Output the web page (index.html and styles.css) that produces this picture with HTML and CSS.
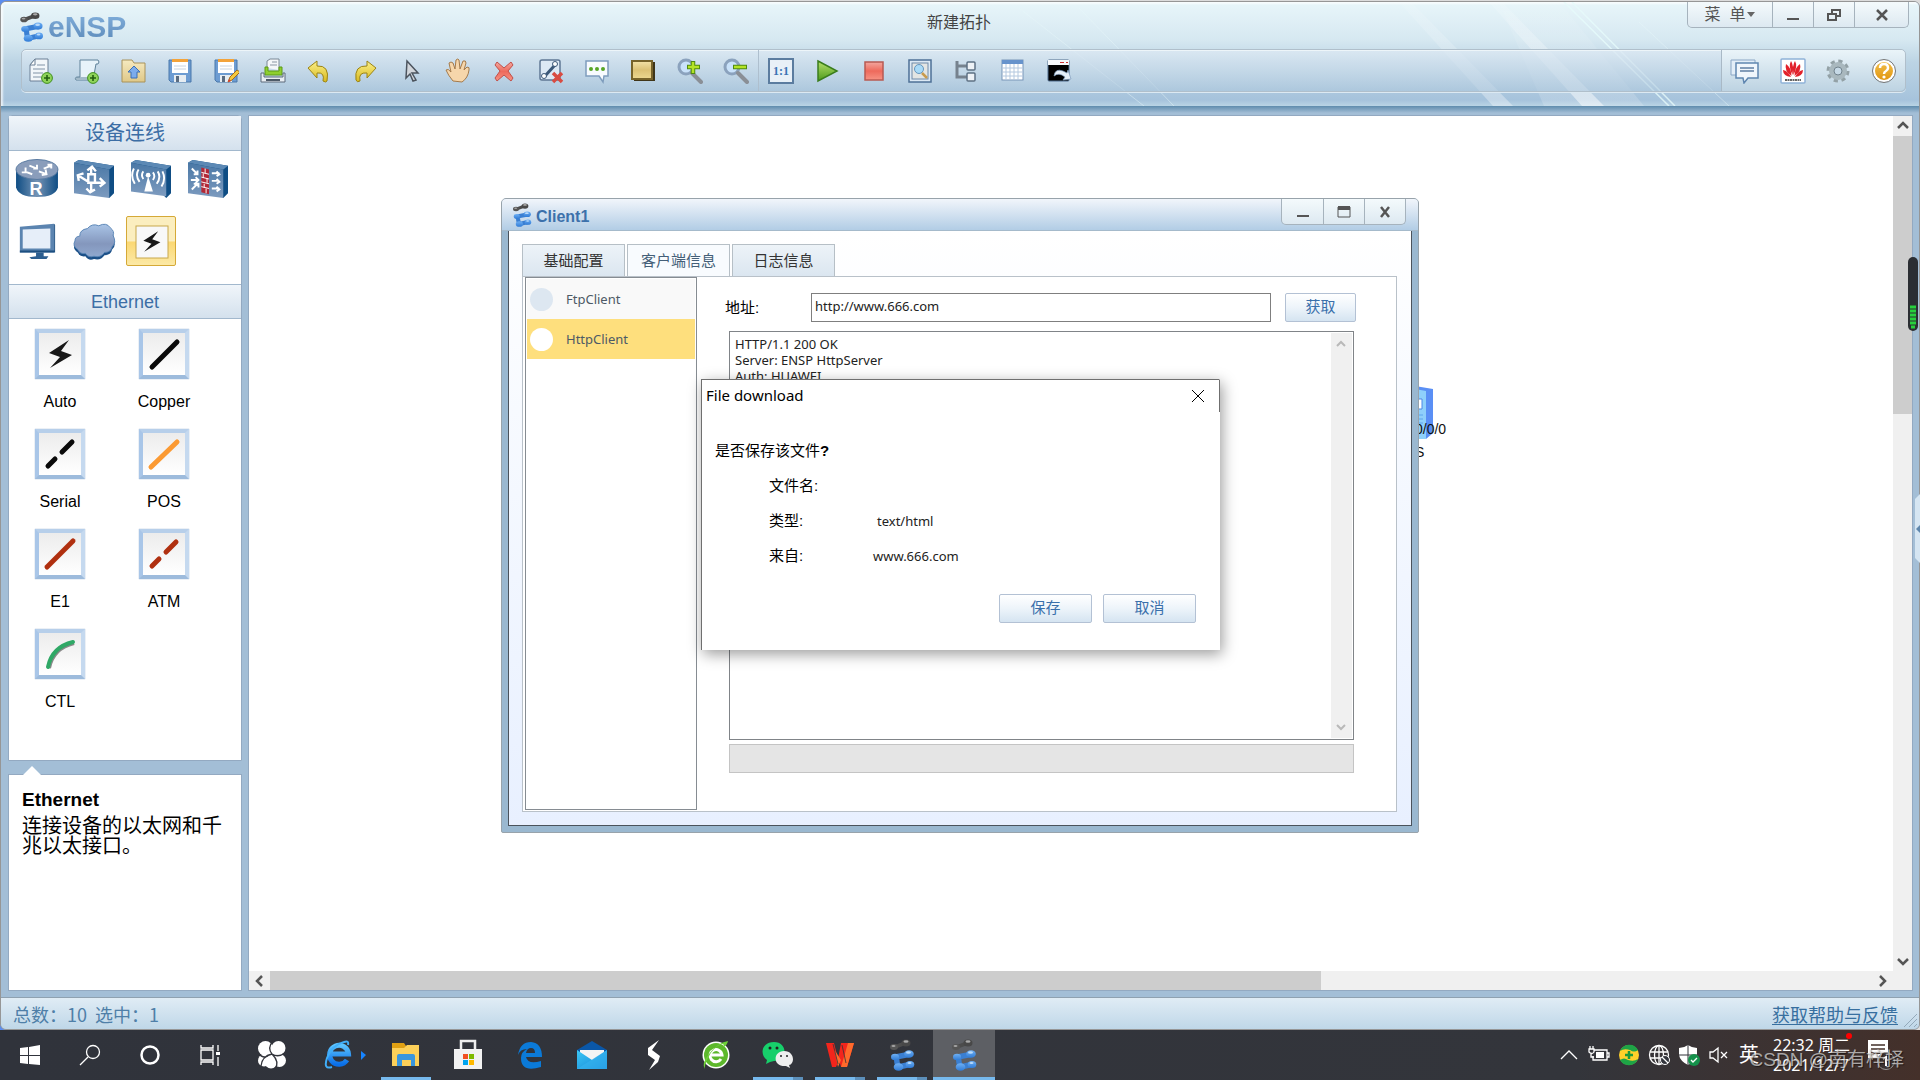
FILE: index.html
```html
<!DOCTYPE html>
<html lang="zh-CN">
<head>
<meta charset="utf-8">
<title>eNSP</title>
<link rel="stylesheet" href="styles.css">
</head>
<body>
<svg class="defs" aria-hidden="true">
  <defs>
    <linearGradient id="gBlue" x1="0" y1="0" x2="0" y2="1"><stop offset="0" stop-color="#6fb0f4"/><stop offset="1" stop-color="#2f7bd6"/></linearGradient>
    <linearGradient id="gSteel" x1="0" y1="0" x2="0" y2="1"><stop offset="0" stop-color="#4a78a6"/><stop offset="1" stop-color="#7d9bbf"/></linearGradient>
    <linearGradient id="gDrum" x1="0" y1="0" x2="1" y2="0"><stop offset="0" stop-color="#0f4d84"/><stop offset=".5" stop-color="#7594b5"/><stop offset="1" stop-color="#0f4d84"/></linearGradient>
    <linearGradient id="gCloud" x1="0" y1="0" x2="0" y2="1"><stop offset="0" stop-color="#a9c4e6"/><stop offset=".6" stop-color="#8497bd"/><stop offset="1" stop-color="#90a8ce"/></linearGradient>
    <linearGradient id="gFold" x1="0" y1="0" x2="0" y2="1"><stop offset="0" stop-color="#f6eac0"/><stop offset="1" stop-color="#dfc888"/></linearGradient>
    <linearGradient id="gNote" x1="0" y1="0" x2="0" y2="1"><stop offset="0" stop-color="#f3e2a8"/><stop offset=".5" stop-color="#dcc175"/><stop offset="1" stop-color="#ecd891"/></linearGradient>
    <linearGradient id="gYel" x1="0" y1="0" x2="0" y2="1"><stop offset="0" stop-color="#fbf08a"/><stop offset="1" stop-color="#d8b91e"/></linearGradient>
    <linearGradient id="gGreen" x1="0" y1="0" x2="0" y2="1"><stop offset="0" stop-color="#b5e06a"/><stop offset="1" stop-color="#4c9a1b"/></linearGradient>
    <linearGradient id="gRed" x1="0" y1="0" x2="0" y2="1"><stop offset="0" stop-color="#f3a79f"/><stop offset=".5" stop-color="#ee6a5c"/><stop offset="1" stop-color="#f79384"/></linearGradient>
    <linearGradient id="gGold" x1="0" y1="0" x2="0" y2="1"><stop offset="0" stop-color="#f2c04c"/><stop offset="1" stop-color="#e0940f"/></linearGradient>
    <linearGradient id="gIe" x1="0" y1="0" x2="0" y2="1"><stop offset="0" stop-color="#5cc4ff"/><stop offset="1" stop-color="#0a6fe8"/></linearGradient>
    <linearGradient id="gMail" x1="0" y1="0" x2="1" y2="1"><stop offset="0" stop-color="#3cc8f4"/><stop offset="1" stop-color="#1583d8"/></linearGradient>
    <linearGradient id="gRay" x1="0" y1="0" x2="0" y2="1"><stop offset="0" stop-color="#fff" stop-opacity=".1"/><stop offset="1" stop-color="#fff" stop-opacity=".5"/></linearGradient>
    <symbol id="logo" viewBox="0 0 25 32">
      <path d="M4 8.500L16 4" stroke="#4c4c4c" stroke-width="4" stroke-linecap="round"/>
      <ellipse cx="4.500" cy="8" rx="4" ry="3" fill="#555"/><ellipse cx="16.500" cy="4" rx="4.500" ry="3.500" fill="#484848"/>
      <ellipse cx="4" cy="7" rx="2" ry="1" fill="#a5a5a5"/><ellipse cx="16.500" cy="2.500" rx="2.500" ry="1.200" fill="#aaa"/>
      <path d="M6 18L19 15.500M7 18Q7 24 9 28L20 25.500" fill="none" stroke="#3a7fd2" stroke-width="5.500" stroke-linecap="round" stroke-linejoin="round"/>
      <g fill="url(#gBlue)"><ellipse cx="5.500" cy="18" rx="4" ry="3.200"/><ellipse cx="19.500" cy="15" rx="4.800" ry="3.800"/><ellipse cx="9" cy="28" rx="4.800" ry="3.800"/><ellipse cx="20.500" cy="25.500" rx="4.300" ry="3.600"/></g>
      <ellipse cx="19" cy="13.500" rx="2.500" ry="1.300" fill="#b9dafa"/><ellipse cx="20" cy="24" rx="2" ry="1.100" fill="#b9dafa"/>
    </symbol>
    <symbol id="plus" viewBox="0 0 12 12"><circle cx="6" cy="6" r="5.400" fill="#8fd45a" stroke="#3f8f1f"/><path d="M6 3v6M3 6h6" stroke="#235f10" stroke-width="1.600"/></symbol>
    <symbol id="floppy" viewBox="0 0 26 26"><path d="M2 2h22v22H4l-2-2z" fill="#6d9cd2" stroke="#4b78ab"/><path d="M5 2h16v13H5z" fill="#fff"/><path d="M5 1h16v3H5z" fill="#f3a33a"/><path d="M7 8h12M7 11h12" stroke="#c8d4e0"/><path d="M7 17h12v7H7z" fill="#e7edf2"/><path d="M9 18h3v6H9z" fill="#5b6c80"/></symbol>
    <symbol id="bolt" viewBox="0 0 50 50"><path d="M34 11 L14 24 L25 28 L15 39 L37 26 L26 22Z" fill="#181818"/></symbol>
  </defs>
</svg>

<main class="app">
  <header class="head">
    <svg class="rays" viewBox="0 0 920 104" width="920" height="104" aria-hidden="true">
      <path d="M500 0H560L645 104H545Z" fill="url(#gRay)" opacity=".35"/>
      <path d="M490 0H503L605 104H583Z" fill="url(#gRay)"/>
      <path d="M400 0H412L514 104H494Z" fill="url(#gRay)" opacity=".7"/>
      <path d="M565 0L670 104M573 0L676 104" stroke="#e6fbfb" stroke-width="1.500" opacity=".8"/>
      <path d="M640 20L730 104M20 6L145 104M80 6L175 104" stroke="#e8f8fa" opacity=".45"/>
    </svg>
    <div class="brandrow">
      <div class="brand"><svg width="27" height="30"><use href="#logo"/></svg><span>eNSP</span></div>
      <h1 class="doctitle">新建拓扑</h1>
      <div class="winbtns main">
        <button class="menu">菜&nbsp; 单<svg width="8" height="6"><path d="M0 0h8L4 5z" fill="#666"/></svg></button>
        <button aria-label="最小化"><svg width="14" height="14"><path d="M1 10h12v2H1z" fill="#555"/></svg></button>
        <button aria-label="还原"><svg width="14" height="14"><path d="M5 5V2h8v6h-3M1 6h8v6H1z" fill="none" stroke="#555" stroke-width="2"/></svg></button>
        <button class="close" aria-label="关闭"><svg width="14" height="14"><path d="M2 2L12 12M12 2L2 12" stroke="#555" stroke-width="2.500"/></svg></button>
      </div>
    </div>
    <nav class="toolbar">
      <div class="tools first">
        <button aria-label="新建拓扑"><svg viewBox="0 0 26 26"><path d="M7 1h13v22H2V7z" fill="#f2f6fa" stroke="#6a7f95"/><path d="M7 1v6H2z" fill="#fff" stroke="#6a7f95"/><path d="M9 7h8M5 11h12M5 15h10M5 19h8" stroke="#a7b4c2" stroke-width="1.500"/><use href="#plus" x="13" y="14" width="12" height="12"/></svg></button>
        <button aria-label="新建试卷工程"><svg viewBox="0 0 26 26"><path d="M6 2h18q2 2 0 4h-2l-3 16H2q-2-3 2-3h2z" fill="#e8f3fa" stroke="#5f8199"/><path d="M2 20h13" stroke="#5f8199"/><use href="#plus" x="13" y="14" width="12" height="12"/></svg></button>
        <button aria-label="打开"><svg viewBox="0 0 26 26"><path d="M1 4V2h10l2 3h11v19H1z" fill="url(#gFold)" stroke="#a8925a"/><path d="M13 8l6 6h-3v6h-6v-6H7z" fill="#7cacec" stroke="#3b6fb5"/></svg></button>
        <button aria-label="保存"><svg viewBox="0 0 26 26"><use href="#floppy"/></svg></button>
        <button aria-label="另存为"><svg viewBox="0 0 26 26"><use href="#floppy"/><path d="M15 24l2-5 7-7 3 2-8 8z" fill="#f4c93c" stroke="#a06a1e"/><path d="M15 24l1-3 2 2z" fill="#d33"/></svg></button>
        <button aria-label="打印"><svg viewBox="0 0 26 26"><path d="M7 10V3l3-2h9v11" fill="#f4f6f8" stroke="#7b8896"/><path d="M12 4h5M10 7h7" stroke="#8a96a4"/><path d="M5 9h3v4h11V9h3v8H5z" fill="#8fcf2f" stroke="#5a9a19"/><path d="M1 15h3v4h19v-4h2v9H1z" fill="#e9eef3" stroke="#5d6b7a"/><path d="M6 22h14" stroke="#4d5a68" stroke-width="2"/></svg></button>
        <button aria-label="撤销"><svg viewBox="0 0 26 26"><path d="M2 10l9-7v5q13-1 10 15-1 2-4 0 2-9-6-8v5z" fill="url(#gYel)" stroke="#9a8315"/></svg></button>
        <button aria-label="恢复"><svg viewBox="0 0 26 26"><path d="M24 10l-9-7v5Q2 7 4 22q1 3 4 1-2-9 7-8v5z" fill="url(#gYel)" stroke="#9a8315"/></svg></button>
        <button aria-label="选择"><svg viewBox="0 0 26 26"><path d="M8 3l11 12h-6l4 7-3 1-3-7-4 4z" fill="#d2d6db" stroke="#4c545e" stroke-width="1.500"/></svg></button>
        <button aria-label="拖动"><svg viewBox="0 0 26 26"><path d="M8 23Q3 17 1 12q2-2 5 2L4 5q2-2 4 0l2 6 1-9q2-2 3 0l1 9 3-8q3-1 3 2l-2 7 3-3q3 0 2 3-1 8-7 12z" fill="#f6d6ab" stroke="#a47a4b"/></svg></button>
        <button aria-label="删除"><svg viewBox="0 0 26 26"><path d="M6 4l7 6 7-6 2 3-5 6 5 7-2 3-7-6-7 6-2-3 5-7-5-6z" fill="url(#gRed)" stroke="#c0504a"/></svg></button>
        <button aria-label="删除连线"><svg viewBox="0 0 26 26"><rect x="2" y="2" width="20" height="20" rx="2" fill="#dde9f5" stroke="#5f7794" stroke-width="1.500"/><path d="M7 18L17 7" stroke="#3c5878" stroke-width="3"/><circle cx="6" cy="18" r="2.500" fill="#fff" stroke="#3c5878"/><circle cx="17" cy="6" r="2.500" fill="#fff" stroke="#3c5878"/><path d="M15 15l9 9M24 15l-9 9" stroke="#d94b41" stroke-width="3.500"/></svg></button>
        <button aria-label="文本"><svg viewBox="0 0 26 26"><path d="M2 3h22v15h-4l-1 6-4-6H2z" fill="#f8fbfe" stroke="#7f9dbd" stroke-width="1.500"/><g fill="#57a526"><circle cx="7" cy="11" r="2"/><circle cx="13" cy="11" r="2"/><circle cx="19" cy="11" r="2"/></g></svg></button>
        <button aria-label="调色板"><svg viewBox="0 0 26 26"><path d="M4 4h21v19H4z" fill="#3f3519"/><path d="M2 3h20v18H2z" fill="url(#gNote)" stroke="#76622a" stroke-width="2"/></svg></button>
        <button aria-label="放大"><svg viewBox="0 0 26 26"><circle cx="9" cy="9" r="7" fill="#c9e2fa" stroke="#8ba2bd" stroke-width="3"/><path d="M15 15l9 9" stroke="#8a8f96" stroke-width="4" stroke-linecap="round"/><path d="M16 3v13M10 9h13" stroke="#4f8a12" stroke-width="4.500"/><path d="M16 4v11M11 9h11" stroke="#b4e326" stroke-width="2.500"/></svg></button>
        <button aria-label="缩小"><svg viewBox="0 0 26 26"><circle cx="9" cy="9" r="7" fill="#c9e2fa" stroke="#8ba2bd" stroke-width="3"/><path d="M15 15l9 9" stroke="#8a8f96" stroke-width="4" stroke-linecap="round"/><path d="M10 9h14" stroke="#4f8a12" stroke-width="4.500"/><path d="M11 9h12" stroke="#b4e326" stroke-width="2.500"/></svg></button>
      </div>
      <div class="tools second">
        <button class="ratio" aria-label="原始大小"><span>1:1</span></button>
        <button aria-label="开启设备"><svg viewBox="0 0 26 26"><path d="M4 3L23 13 4 23z" fill="url(#gGreen)" stroke="#3a7d1c" stroke-width="1.500"/></svg></button>
        <button aria-label="停止设备"><svg viewBox="0 0 26 26"><rect x="4" y="4" width="18" height="18" fill="url(#gRed)" stroke="#b85a52" stroke-width="1.500"/></svg></button>
        <button aria-label="数据抓包"><svg viewBox="0 0 26 26"><rect x="2" y="2" width="22" height="22" fill="#dce9f5" stroke="#4e7096" stroke-width="1.500"/><rect x="5" y="5" width="16" height="16" fill="#e3e5e3" stroke="#6f8aa8"/><circle cx="12" cy="11" r="4.500" fill="#a9daf7" stroke="#6696bd"/><path d="M15 15l5 5" stroke="#c89b4e" stroke-width="2.500"/></svg></button>
        <button aria-label="显示接口"><svg viewBox="0 0 26 26"><path d="M4 3v16h10M4 8h10" fill="none" stroke="#76828e" stroke-width="3"/><rect x="14" y="4" width="8" height="8" rx="1" fill="#eef2f6" stroke="#5e7184" stroke-width="1.500"/><rect x="14" y="15" width="8" height="8" rx="1" fill="#eef2f6" stroke="#5e7184" stroke-width="1.500"/></svg></button>
        <button aria-label="网格"><svg viewBox="0 0 26 26"><rect x="2" y="2" width="21" height="20" fill="#fff" stroke="#7995b8"/><path d="M2 2h21v4H2z" fill="#6793cc"/><path d="M2 10h21M2 14h21M2 18h21M6 6v16M10 6v16M14 6v16M18 6v16" stroke="#b4c8df"/></svg></button>
        <button aria-label="命令行"><svg viewBox="0 0 26 26"><rect x="2" y="2" width="21" height="21" rx="1" fill="#000" stroke="#4d6a8b"/><path d="M2 2h21v5H2z" fill="#f6f8fa"/><path d="M14 4.500h4M20 4.500h2" stroke="#c33"/><path d="M8 18Q9 10 17 13l4 2 1-3 3 9-8 1 2-3q-6-5-11-1z" fill="#e6eff8" stroke="#7e9cbd" stroke-width=".7"/></svg></button>
      </div>
      <div class="tools extra">
        <button aria-label="论坛"><svg viewBox="0 0 30 26"><path d="M1 2h24v15H1z" fill="#e3eef8" stroke="#8aa6c5"/><path d="M6 5h22v15H18l-4 5-1-5H6z" fill="#f0f6fc" stroke="#5f86b0" stroke-width="1.500"/><path d="M10 10h14M10 13h14" stroke="#5f7fa3" stroke-width="1.500"/></svg></button>
        <button aria-label="华为"><svg viewBox="0 0 26 26"><rect x="1" y="1" width="24" height="24" rx="1" fill="#fff" stroke="#8fb2d8" stroke-width="1.500"/><g fill="#e2212b"><path d="M12.500 17Q8 8 11 3q3 4 1.500 14z"/><path d="M13.500 17Q18 8 15 3q-3 4-1.500 14z"/><path d="M11.500 18Q4 13 6 6q5 3 5.500 12z"/><path d="M14.500 18q7.500-5 5.500-12-5 3-5.500 12z"/><path d="M11 19q-8-1-8-7 5 1 8 7z"/><path d="M15 19q8-1 8-7-5 1-8 7z"/></g><path d="M5 22h16" stroke="#666" stroke-width="2" stroke-dasharray="2 .5"/></svg></button>
        <button aria-label="设置"><svg viewBox="0 0 26 26"><circle cx="13" cy="13" r="9.500" fill="none" stroke="#93a1a6" stroke-width="4" stroke-dasharray="4 3.460"/><circle cx="13" cy="13" r="6.500" fill="none" stroke="#a9b8be" stroke-width="5"/><circle cx="13" cy="13" r="4" fill="#c6d9e6" stroke="#71828c"/></svg></button>
        <button aria-label="帮助"><svg viewBox="0 0 26 26"><circle cx="13" cy="13" r="10" fill="url(#gGold)" stroke="#fff" stroke-width="2"/><circle cx="13" cy="13" r="11.500" fill="none" stroke="#777"/><path d="M9 10q0-4 4-4t4 4q0 2-2 3t-2 3" fill="none" stroke="#fff" stroke-width="2.500"/><circle cx="13" cy="19" r="1.600" fill="#fff"/></svg></button>
      </div>
    </nav>
  </header>

  <div class="work">
    <aside class="side">
      <section class="panel devices">
        <h2>设备连线</h2>
        <div class="kinds">
          <button aria-label="路由器"><svg viewBox="0 0 46 42"><path d="M1 11v19q3 10 22 10t22-10V11z" fill="url(#gDrum)"/><ellipse cx="23" cy="11" rx="22" ry="10.500" fill="#8a9dbb" stroke="#56789f"/><g stroke="#fff" stroke-width="2" fill="none"><path d="M10 13l8 3M11 9v5h-4M15 7l8 3M23 6v4h-4M25 13l8 3M32 11l1 5-5 1M30 10l8-3M34 6h4v4"/></g><text x="15" y="38" class="rlabel">R</text></svg></button>
          <button aria-label="交换机"><svg viewBox="0 0 46 42"><path d="M2 4l5-3 37 6v29l-5 5z" fill="#0f4d84"/><path d="M2 4l5-3 37 6-5 4z" fill="#5c89b5"/><path d="M2 4l37 7v30L2 36z" fill="url(#gSteel)"/><g stroke="#fff" stroke-width="2.500" fill="none"><path d="M17 16h7v9h-7zM20 16V8M16 12l5-4 4 5M17 24L6 17M12 15l-6 2 1 6M24 25h9M29 20l5 5-5 4M20 25v10M15 31l4 4 5-3"/></g></svg></button>
          <button aria-label="无线"><svg viewBox="0 0 46 42"><path d="M2 4l5-3 37 6v29l-5 5z" fill="#0f4d84"/><path d="M2 4l5-3 37 6-5 4z" fill="#5c89b5"/><path d="M2 4l37 7v28L2 34z" fill="url(#gSteel)"/><path d="M20 18l5 16h-9z" fill="#fff"/><circle cx="20" cy="17" r="2.500" fill="#fff"/><g stroke="#fff" stroke-width="2" fill="none"><path d="M15 13q-3 4 0 8M10 11q-4 6 1 13M5 10q-4 8 1 16M25 14q3 4 0 8M30 13q4 6-1 13M35 13q4 8-1 16"/></g></svg></button>
          <button aria-label="防火墙"><svg viewBox="0 0 46 42"><path d="M2 4l5-3 37 6v29l-5 5z" fill="#0f4d84"/><path d="M2 4l5-3 37 6-5 4z" fill="#5c89b5"/><path d="M2 4l37 7v30L2 36z" fill="url(#gSteel)"/><path d="M16 9l8 2v26l-8-2z" fill="#b32836"/><path d="M16 14l8 2M16 19l8 2M16 24l8 2M16 29l8 2M20 10v5M18 15v5M22 20v5M19 26v4M21 31v5" stroke="#fff"/><g stroke="#fff" stroke-width="2" fill="none"><path d="M6 10l6 6M12 12v4H8M5 22h8M10 19l3 3-3 3M6 32l6-6M8 26h5v4M27 15h8M32 13l3 3-3 2M27 23h8M32 21l3 3-3 2M27 31h8M32 29l3 3-3 2"/></g></svg></button>
          <button aria-label="终端"><svg viewBox="0 0 46 42"><path d="M5 6l36-3v30H5z" fill="#5b84b0"/><path d="M41 3l1 1v29H5v-2h36z" fill="#1c4f80"/><path d="M8 9l29-1v21H8z" fill="#e6eef9"/><path d="M22 33h8v4h5l-2 3H17l-2-2 7-1z" fill="#2c5e90"/></svg></button>
          <button aria-label="其他设备"><svg viewBox="0 0 46 42"><path d="M6 30q-6-4-3-9 0-5 5-5 0-7 8-8 5-6 12-3 8-4 12 2 5 4 3 8 4 8-1 12-1 6-8 6-4 6-11 4-6 2-9-3-6 1-8-4z" fill="#1c5088" transform="translate(0 3)"/><path d="M6 30q-6-4-3-9 0-5 5-5 0-7 8-8 5-6 12-3 8-4 12 2 5 4 3 8 4 8-1 12-1 6-8 6-4 6-11 4-6 2-9-3-6 1-8-4z" fill="url(#gCloud)" stroke="#5a85b5"/></svg></button>
          <button class="on" aria-label="设备连线"><svg viewBox="0 0 50 50"><rect x="9" y="9" width="32" height="32" fill="#f8f8f8" stroke="#c8a84c"/><g transform="translate(6 6) scale(.74)"><use href="#bolt" width="50" height="50"/></g></svg></button>
        </div>
        <h2 class="sub">Ethernet</h2>
        <div class="cables">
          <button><svg width="50" height="50"><use href="#bolt" width="50" height="50"/></svg>Auto</button>
          <button><svg width="50" height="50"><path d="M13 38L38 13" stroke="#0a0a0a" stroke-width="5" stroke-linecap="round"/></svg>Copper</button>
          <button><svg width="50" height="50"><path d="M13 37l7-7M27 23L37 13" stroke="#0a0a0a" stroke-width="5" stroke-linecap="round"/></svg>Serial</button>
          <button><svg width="50" height="50"><path d="M12 38L38 13" stroke="#fb9a33" stroke-width="5" stroke-linecap="round"/></svg>POS</button>
          <button><svg width="50" height="50"><path d="M12 38L38 12" stroke="#b03010" stroke-width="5" stroke-linecap="round"/></svg>E1</button>
          <button><svg width="50" height="50"><path d="M13 37l7-7M27 23L37 13" stroke="#b03010" stroke-width="5" stroke-linecap="round"/></svg>ATM</button>
          <button><svg width="50" height="50"><path d="M14 39Q18 19 39 14" stroke="#888" stroke-width="4" fill="none"/><path d="M13 38Q17 18 38 13" stroke="#2fa866" stroke-width="4" fill="none" stroke-linecap="round"/></svg>CTL</button>
        </div>
      </section>
      <section class="panel info">
        <h3>Ethernet</h3>
        <p>连接设备的以太网和千兆以太接口。</p>
      </section>
    </aside>
    <section class="canvas">
      <div class="paper"></div>
      <div class="vbar"><svg width="19" height="20"><path d="M5 12l5-5 5 5" class="arr"/></svg><i></i><svg class="end" width="19" height="20"><path d="M5 8l5 5 5-5" class="arr"/></svg></div>
      <div class="hbar"><svg width="21" height="19"><path d="M13 5L8 10l5 5" class="arr"/></svg><i></i><svg class="end" width="21" height="19"><path d="M8 5l5 5-5 5" class="arr"/></svg></div>
      <div class="corner"></div>
    </section>
  </div>

  <footer class="status"><span>总数：10&nbsp; 选中：1</span><a href="#help">获取帮助与反馈</a>
    <svg class="grip" width="16" height="16"><path d="M2 15L15 2M7 15l8-8M12 15l3-3" stroke="#93a9ba"/></svg></footer>
</main>

<div class="node"><svg width="20" height="54"><path d="M0 0l18 3v44l-7 6H0z" fill="#5a8ff5"/><path d="M0 3l11 2v48H0z" fill="#8fd0fb"/><path d="M0 13h7v10H0z" fill="#fff" stroke="#4d87e8"/><path d="M0 29h8M0 33h8M0 37h8" stroke="#5fa6ee"/></svg><span class="port">0/0/0</span><span class="name">S</span></div>
<svg class="meter" width="10" height="74" aria-hidden="true"><rect width="10" height="74" rx="5" fill="#2b2e33"/><path d="M2 50h6M2 54h6M2 58h6M2 62h6M2 66h6M3 70h4" stroke="#27d03c" stroke-width="3"/></svg>
<svg class="handle" width="5" height="69" aria-hidden="true"><path d="M5 0L0 5v59l5 5z" fill="#d5e5f2"/><path d="M5 31l-4 4 4 4z" fill="#5f87ad"/></svg>

<section class="client">
  <header><svg width="20" height="24"><use href="#logo"/></svg><h2>Client1</h2>
    <div class="winbtns">
      <button aria-label="最小化"><svg width="14" height="14"><path d="M1 10h12v2H1z" fill="#555"/></svg></button>
      <button aria-label="最大化"><svg width="14" height="14"><path d="M1 2h12v10H1z" fill="none" stroke="#555"/><path d="M1 1h12v4H1z" fill="#555"/></svg></button>
      <button aria-label="关闭"><svg width="12" height="14"><path d="M2 2l8 10M10 2L2 12" stroke="#555" stroke-width="2.500"/></svg></button>
    </div>
  </header>
  <div class="cbody">
    <div class="tabs"><button>基础配置</button><button class="cur">客户端信息</button><button>日志信息</button></div>
    <div class="page">
      <ul class="list"><li><button>FtpClient</button></li><li><button class="sel">HttpClient</button></li></ul>
      <div class="form">
        <div class="addr"><label for="url">地址:</label><input id="url" type="text" value="http://www.666.com"><button class="btn">获取</button></div>
        <div class="resp"><textarea aria-label="响应" readonly>HTTP/1.1 200 OK
Server: ENSP HttpServer
Auth: HUAWEI</textarea>
          <div class="rbar"><svg width="21" height="21"><path d="M6 13l4-4 4 4" class="dim"/></svg><svg width="21" height="21"><path d="M6 8l4 4 4-4" class="dim"/></svg></div></div>
        <div class="progress" role="progressbar" aria-label="进度"></div>
      </div>
    </div>
  </div>
</section>

<section class="dialog" role="dialog" aria-labelledby="dt">
  <header><h2 id="dt">File download</h2><button aria-label="关闭"><svg width="14" height="14"><path d="M1 1l12 12M13 1L1 13" stroke="#000"/></svg></button></header>
  <p>是否保存该文件<b>?</b></p>
  <dl><dt>文件名:</dt><dd></dd><dt>类型:</dt><dd class="type">text/html</dd><dt>来自:</dt><dd>www.666.com</dd></dl>
  <div class="acts"><button class="btn">保存</button><button class="btn">取消</button></div>
</section>

<footer class="taskbar">
  <button class="sys" aria-label="开始"><svg width="22" height="22"><path d="M1 4l8-1v8H1zM10 3l11-2v10H10zM1 12h8v8l-8-1zM10 12h11v9l-11-1z" fill="#fff"/></svg></button>
  <button class="sys" aria-label="搜索"><svg width="22" height="22"><circle cx="14" cy="8" r="6.500" class="ln"/><path d="M9 13l-8 8" class="ln"/></svg></button>
  <button class="sys" aria-label="Cortana"><svg width="22" height="22"><circle cx="11" cy="11" r="8.500" fill="none" stroke="#fff" stroke-width="2.500"/></svg></button>
  <button class="sys" aria-label="任务视图"><svg width="22" height="22"><path d="M2 6h12v10H2zM2 1v3h12V1M2 21v-3h12v3M19 1v6M19 13v9" class="ln"/><path d="M17 8h4v3h-4z" fill="#fff"/></svg></button>
  <button aria-label="Swirl"><svg width="30" height="30" viewBox="0 0 30 30"><g fill="#fff"><circle cx="8.500" cy="8.500" r="7.500"/><circle cx="21.500" cy="8" r="7"/><circle cx="22.500" cy="20.500" r="6.500"/><circle cx="14" cy="22" r="6.500"/><circle cx="7" cy="20.500" r="6"/><circle cx="15" cy="14" r="5"/></g><g fill="none" stroke="#32343b" stroke-width="1.300"><path d="M16 1Q10 8 15 14M28 13q-7 5-13 1M18 29q5-7-3-15M4 26q1-10 11-12M1 13q5 6 10 3"/></g></svg></button>
  <button class="ie" aria-label="Internet Explorer"><svg width="42" height="30" viewBox="0 0 42 30"><path d="M23 20A9.500 9.500 0 1 1 24.500 14H8" fill="none" stroke="url(#gIe)" stroke-width="5"/><path d="M24 5Q25 0 20 2 8 5 3 18q-4 12 5 9" fill="none" stroke="#41aef8" stroke-width="2"/><path d="M37 11l5 4-5 5z" fill="#1684ff"/></svg></button>
  <button class="one" aria-label="文件资源管理器"><svg width="30" height="26"><path d="M1 1h12l2 3h13v4H1z" fill="#e0a013"/><path d="M1 6h12l3-3h12v21H1z" fill="#fcd059"/><path d="M6 24V14q0-2 2-2h14q2 0 2 2v10h-4v-6h-9v6z" fill="#3a96dd"/></svg></button>
  <button aria-label="应用商店"><svg width="30" height="32"><path d="M8 11V2h14v9" fill="none" stroke="#eee" stroke-width="2.500"/><path d="M1 10h28v20H1z" fill="#f2f2f2"/><path d="M10 15h5v5h-5z" fill="#f25022"/><path d="M16 15h5v5h-5z" fill="#7fba00"/><path d="M10 21h5v5h-5z" fill="#00a4ef"/><path d="M16 21h5v5h-5z" fill="#ffb900"/></svg></button>
  <button aria-label="Edge"><svg width="26" height="28"><path d="M1 14Q3 1 14 1q11 1 11 15H9q2 8 15 4v6Q4 32 4 17q0-6 6-9-7 0-9 6zM9 12h9q0-5-4-5t-5 5z" fill="#0b7ad8"/></svg></button>
  <button aria-label="邮件"><svg width="32" height="30"><path d="M1 10L16 1l15 9v6H1z" fill="#0a57a8"/><path d="M4 10h24v8L16 24 4 18z" fill="#f4f4f4"/><path d="M1 10l15 10 15-10v19H1z" fill="url(#gMail)"/><path d="M1 29L31 10v19z" fill="#37b4ee" opacity=".6"/></svg></button>
  <button aria-label="S"><svg width="20" height="32"><path d="M15 1L4 9l0 7 7 5-6 10 9-8 2-6-8-6z" fill="#fff"/></svg></button>
  <button aria-label="浏览器"><svg width="30" height="30"><circle cx="15" cy="15" r="13.500" fill="#fff"/><circle cx="15" cy="15" r="12" fill="#5db82c"/><path d="M20 19a6 6 0 1 1 1-4H10" fill="none" stroke="#fff" stroke-width="3"/><path d="M4 29Q0 24 8 14 16 3 27 1q-1 5-5 6 2-3-1-3Q12 7 7 18q-4 8-3 11z" fill="#6ed038"/></svg></button>
  <button class="many" aria-label="微信"><svg width="32" height="28"><path d="M12 1c14 0 14 19 0 19l-4 1-4 2 1-4C-3 13 0 1 12 1z" fill="#17cf6b"/><path d="M22 10c11 0 11 13 5 14l1 3-4-2c-14 1-13-15-2-15z" fill="#eee"/><g fill="#222"><circle cx="8" cy="7" r="1.500"/><circle cx="15" cy="7" r="1.500"/><circle cx="19" cy="15" r="1"/><circle cx="25" cy="15" r="1"/></g></svg></button>
  <button class="many" aria-label="WPS"><svg width="30" height="26"><path d="M1 1h8l4 16 3-16h13l-7 24h-6l-2-7-3 7H7z" fill="#f3251c"/><path d="M23 1l-7 24h6L29 1zM9 7l4 18 3-7" fill="#ff6a2b"/><path d="M17 3l4 18M8 2l5 20" stroke="#32343b" stroke-width=".8"/></svg></button>
  <button class="many" aria-label="eNSP"><svg width="26" height="32"><use href="#logo"/></svg></button>
  <button class="one live" aria-label="Client1"><svg width="26" height="32"><use href="#logo"/></svg></button>
  <div class="tray">
    <button aria-label="显示隐藏的图标"><svg width="22" height="22"><path d="M3 15l8-8 8 8" class="ln"/></svg></button>
    <button aria-label="电池"><svg width="22" height="22"><path d="M6 6h13v10H5v-4M19 9h2v4h-2M1 5h5v3q-2 3-5 0zM2 2v3M5 2v3M3 9v4h3" class="ln"/><path d="M8 8h8v6H8z" fill="#fff"/></svg></button>
    <button aria-label="安全"><svg width="22" height="22"><circle cx="11" cy="11" r="10" fill="#ffd12a"/><path d="M2 7a10 10 0 0 1 18-1q-4 3-8 0-6-2-10 1zM20 15a10 10 0 0 1-18 1q4-3 8 0 6 2 10-1z" fill="#1ea446"/><path d="M11 7v8M7 11h8" stroke="#1b9a3c" stroke-width="2.500"/></svg></button>
    <button aria-label="网络"><svg width="22" height="22"><circle cx="11" cy="11" r="9.500" class="ln"/><ellipse cx="11" cy="11" rx="4.500" ry="9.500" class="ln"/><path d="M2 8h18M2 14h12M11 1v20" class="ln"/><circle cx="17" cy="16" r="4.500" fill="#32343b" stroke="#fff"/><path d="M14 13l6 6" class="ln"/></svg></button>
    <button aria-label="安全中心"><svg width="22" height="22"><path d="M10 1q4 3 9 3v7q-1 6-9 10Q2 17 1 11V4q5 0 9-3z" fill="#fff"/><path d="M10 1v20M1 11h18" stroke="#32343b"/><circle cx="16" cy="16" r="6" fill="#15914b"/><path d="M13 16l2 2 4-4" class="ln"/></svg></button>
    <button aria-label="音量"><svg width="22" height="22"><path d="M2 8h3l5-4v14l-5-4H2zM13 8l6 6M19 8l-6 6" class="ln"/></svg></button>
    <button class="ime">英</button>
    <div class="clock"><time>22:32 周二</time><time>2021/12/7</time></div>
    <button class="note" aria-label="通知"><svg width="30" height="34"><path d="M2 2h20v18h-7l-4 4v-4H2z" fill="#fff"/><path d="M5 7h14M5 11h14M5 15h9" stroke="#43302a" stroke-width="1.500"/><circle cx="20" cy="23" r="8.500" fill="#3b3332" stroke="#999"/><path d="M17 21l3-2v9" fill="none" stroke="#fff" stroke-width="2"/></svg></button>
  </div>
  <i class="reddot"></i>
</footer>
<div class="mark">CSDN @南有梓择</div>
</body>
</html>
```
FILE: styles.css
```css
* { box-sizing: border-box; }
body {
  margin: 0; height: 100vh; overflow: hidden; display: flex; flex-direction: column; position: relative;
  background: linear-gradient(90deg, #5b8def 90px, #dcdcdc 90px);
  font: 15px/20px "Liberation Sans", "Noto Sans CJK SC", sans-serif; color: #000;
}
button { font: inherit; color: inherit; background: none; border: 0; padding: 0; margin: 0; }
h1, h2, h3, p, ul, dl, dd { margin: 0; padding: 0; font-weight: normal; }
ul { list-style: none; }
svg { display: block; flex: none; }
.defs { position: absolute; width: 0; height: 0; }
.arr { fill: none; stroke: #555; stroke-width: 2.500; }
.dim { fill: none; stroke: #b9b9b9; stroke-width: 2; }
.ln { fill: none; stroke: #fff; stroke-width: 1.300; }

/* main window */
.app {
  flex: 1; min-height: 0; margin-top: 1px; display: flex; flex-direction: column;
  border: 1px solid #969696; border-radius: 6px; overflow: hidden; background: #a3bed6;
}
.head {
  position: relative; flex: none; height: 104px; display: flex; flex-direction: column;
  background: linear-gradient(#e8f6fa, #d6e8f1 38px, #bcd4e4 60px, #a6c3dc 98px, #b9d4e5);
  box-shadow: inset 2px 2px 2px rgba(255,255,255,.7);
}
.rays { position: absolute; right: 0; top: 0; }
.brandrow { position: relative; height: 47px; display: grid; grid-template-columns: 1fr auto 1fr; padding-right: 10px; }
.brand { display: flex; align-items: flex-start; padding: 10px 0 0 17px; }
.brand span {
  font: bold 30px/30px "Liberation Sans", sans-serif; padding-left: 3px;
  background: linear-gradient(#83b0dc, #5c8aba); -webkit-background-clip: text; background-clip: text; color: transparent;
}
.doctitle { font-size: 16px; line-height: 24px; padding: 9px 0 0 8px; color: #444; }
.winbtns {
  display: flex; justify-self: end; height: 26px; border: 1px solid #a6b3bd; border-top: 0; border-radius: 0 0 5px 5px;
  background: linear-gradient(#f4fafc, #dde9f1);
}
.winbtns button { width: 41px; display: flex; align-items: center; justify-content: center; }
.winbtns button + button { border-left: 1px solid #a6b3bd; }
.winbtns.main .close { width: 54px; }
.winbtns .menu { width: 84px; color: #555; font-size: 16px; gap: 2px; }
.toolbar {
  position: relative; height: 43px; margin: 0 13px 0 20px; display: flex; border: 1px solid #b0bfcb; border-radius: 5px;
  background: linear-gradient(rgba(222,234,244,.8), rgba(174,200,221,.6)); box-shadow: inset 0 1px 0 #edf5f9, 0 1px 0 #dce9f2;
}
.tools { display: flex; align-items: center; justify-content: space-between; }
.tools button { width: 26px; height: 26px; }
.tools svg { width: 26px; height: 26px; }
.first { width: 737px; padding: 0 9px 0 6px; border-right: 1px solid #aebfce; }
.second { width: 313px; padding-left: 9px; }
.extra { width: 184px; margin-left: auto; padding: 0 8px; border-left: 1px solid #a9b9c6; border-radius: 0 5px 5px 0; background: linear-gradient(#eaf4f9, #bdd3e2); }
.extra button:first-child, .extra button:first-child svg { width: 30px; }
.ratio span { display: block; border: 2px solid #5b7c9f; background: #e8f0f7; color: #3a74b4; font: bold 12px/22px "Liberation Serif", serif; text-align: center; }

/* workspace */
.work {
  flex: 1; min-height: 0; display: flex; gap: 6px; padding: 9px 6px 6px 7px;
  background: linear-gradient(#5f8cad, #a3bed6 7px);
}
.side { width: 234px; display: flex; flex-direction: column; gap: 13px; }
.panel { border: 1px solid #93a9c1; background: #fff; }
.devices { height: 646px; border-radius: 4px 4px 0 0; }
.panel h2 {
  height: 35px; font-size: 20px; line-height: 34px; text-align: center; color: #3c6ea5;
  background: linear-gradient(#f0f5fa, #d4e1ed); border-bottom: 1px solid #a2b8cd;
}
.panel h2.sub { font-size: 18px; border-top: 1px solid #a2b8cd; }
.kinds { height: 133px; padding: 3px 0 0 3px; display: grid; grid-template-columns: repeat(4, 57px); grid-template-rows: 50px 50px; row-gap: 12px; }
.kinds button { width: 50px; height: 50px; display: grid; place-items: center; }
.kinds svg { width: 44px; height: 40px; }
.kinds .on { border: 1px solid #d5a937; border-radius: 2px; background: linear-gradient(#fbeebf 50%, #fbd873 52%, #fce9a6); }
.kinds .on svg { width: 50px; height: 50px; }
.rlabel { font: bold 19px "Liberation Sans", sans-serif; fill: #fff; }
.cables { padding: 10px 0 0 11px; display: grid; grid-template-columns: 80px 80px; column-gap: 24px; grid-auto-rows: 100px; }
.cables button { display: flex; flex-direction: column; align-items: center; justify-content: flex-start; gap: 13px; font-size: 16px; }
.cables svg { border: 4px solid; border-color: #b7cfea #c5d9ef #9dbbdc #a9c6e8; background: linear-gradient(#ececec, #fff); box-shadow: 0 0 1px #88a6c8; }
.cables svg > * { transform: translate(-4px, -4px); }
.info { position: relative; flex: 1; padding: 14px 8px 0 13px; }
.info::before { content: ""; position: absolute; left: 14px; top: -9px; border: 9px solid transparent; border-top: 0; border-bottom-color: #fff; }
.info h3 { font: bold 19px/22px "Liberation Sans", sans-serif; }
.info p { font-size: 20px; line-height: 20px; padding-top: 5px; }
.canvas { flex: 1; min-width: 0; display: grid; grid-template: 1fr 19px / 1fr 19px; border: 1px solid #93a9c1; background: #fff; }
.vbar, .hbar { display: flex; background: #f0f0f0; }
.vbar { flex-direction: column; }
.vbar i { height: 278px; background: #cdcdcd; }
.hbar i { width: 1051px; background: #cdcdcd; }
.vbar .end { margin-top: auto; }
.hbar .end { margin-left: auto; }
.corner { background: #f0f0f0; }
.status {
  position: relative; flex: none; height: 32px; display: flex; align-items: center; justify-content: space-between;
  padding: 0 21px 0 12px; font-size: 18px; color: #4f7fa8; border-top: 1px solid #8fa1b0;
  background: linear-gradient(#e0ecf5, #bfd7e8); font-family: "Noto Sans CJK SC", sans-serif;
}
.status a { color: #376f9f; text-underline-offset: 2px; }
.grip { position: absolute; right: 1px; bottom: 1px; }

/* objects on the topology canvas */
.node { position: absolute; left: 1415px; top: 386px; width: 34px; font-size: 14px; line-height: 16px; color: #111; }
.node span { position: absolute; left: 0; }
.port { top: 35px; }
.name { top: 58px; }
.meter { position: absolute; right: 2px; top: 257px; }
.handle { position: absolute; right: 0; top: 494px; }

/* Client1 window */
.client {
  position: absolute; left: 501px; top: 198px; width: 918px; height: 635px; display: flex; flex-direction: column;
  border: 1px solid #98a3ab; border-radius: 5px 5px 2px 2px; background: #9ab8d0;
}
.client > header { height: 32px; display: flex; align-items: flex-start; padding: 0 12px 0 10px; background: linear-gradient(#f1f5fb, #b2cde5); border-bottom: 1px solid #a5bacb; border-radius: 4px 4px 0 0; }
.client > header svg { margin-top: 4px; }
.client h2 { flex: 1; padding-left: 4px; font: bold 16px/35px "Liberation Sans", sans-serif; color: #3c71ab; }
.client .winbtns svg { margin: 0; }
.cbody {
  flex: 1; margin: 0 6px 6px; padding: 13px 14px 13px 13px; display: flex; flex-direction: column;
  border: 1px solid #4b535c; border-top: 0; background: linear-gradient(#fff, #f7faff 30%, #e8f0ff);
}
.tabs { display: flex; gap: 2px; height: 32px; }
.tabs button { width: 103px; border: 1px solid #b6bfc6; border-bottom: 0; background: linear-gradient(#edf3f8, #dbe6f0); color: #333; }
.tabs .cur { background: #f8fbfe; color: #445f78; }
.page { flex: 1; display: flex; border: 1px solid #b9c1c9; background: #fff; padding: 0 42px 1px 2px; }
.list { width: 172px; border: 1px solid #868c92; padding: 1px 1px; }
.list button {
  width: 100%; height: 40px; display: flex; align-items: center; gap: 13px; padding-left: 3px;
  background: #f9f9f9; color: #4d5a66; font: 13px/16px "Noto Sans", sans-serif;
}
.list button::before { content: ""; width: 23px; height: 23px; border-radius: 50%; background: #dde7f1; }
.list .sel { background: #fedf7d; }
.list .sel::before { background: #fff; }
.form { flex: 1; padding: 16px 0 0 32px; display: flex; flex-direction: column; }
.addr { display: flex; align-items: center; height: 29px; margin-right: -2px; }
.addr label { width: 86px; margin-left: -4px; }
.addr input { flex: 1; min-width: 0; height: 29px; border: 1px solid #7f7f7f; padding: 0 3px 4px; font: 13px/20px "Noto Sans", sans-serif; color: #222; background: #fff; }
.btn { height: 29px; border: 1px solid #b3c1d4; border-radius: 2px; background: linear-gradient(#fff, #edf4fa 50%, #d5e4f1); color: #3a70ab; padding-bottom: 2px; }
.addr .btn { width: 71px; margin-left: 14px; }
.resp { display: flex; height: 409px; margin-top: 9px; border: 1px solid #808488; background: #fff; }
.resp textarea { flex: 1; border: 0; padding: 4px 5px; resize: none; overflow: hidden; font: 13px/16px "Noto Sans", sans-serif; color: #222; background: none; }
.rbar { width: 21px; margin: 1px; background: #f0f0f0; display: flex; flex-direction: column; justify-content: space-between; }
.progress { height: 29px; margin-top: 4px; border: 1px solid #c4c4c4; background: #e5e5e5; }

/* download dialog */
.dialog {
  position: absolute; left: 701px; top: 379px; width: 519px; height: 271px; background: #fff;
  border: 1px solid #6f6f6f; border-right-color: transparent; border-bottom: 0; box-shadow: 2px 4px 14px rgba(0,0,0,.4);
}
.dialog header { display: flex; justify-content: space-between; height: 32px; margin-right: -1px; padding: 0 14px 0 4px; border-right: 1px solid #6f6f6f; }
.dialog h2 { font: 15px/30px "Noto Sans", sans-serif; }
.dialog p { padding: 29px 0 0 13px; }
.dialog dl { margin: 7px 0 0 67px; display: grid; grid-template-columns: 104px 1fr; grid-auto-rows: 35px; align-items: center; }
.dialog dd { font: 13px/20px "Noto Sans", sans-serif; color: #222; }
.dialog .type { padding-left: 4px; }
.acts { display: flex; justify-content: flex-end; gap: 11px; padding: 21px 23px 0 0; }
.acts .btn { width: 93px; }

/* taskbar */
.taskbar {
  position: relative; flex: none; height: 50px; display: flex; color: #fff;
  background: linear-gradient(90deg, #30333b, #33353b 82%, #44302a);
}
.taskbar > button { width: 62px; display: grid; place-items: center; position: relative; }
.taskbar > .sys { width: 60px; }
.taskbar > .sys + button:not(.sys) { margin-left: 1px; }
.taskbar > .ie { width: 72px; padding-left: 12px; }
.one::after, .many::after { content: ""; position: absolute; bottom: 0; left: 6px; right: 6px; height: 3px; background: #76b9ed; }
.many::after { background: linear-gradient(90deg, #76b9ed 40px, #5c8fba 40px); }
.live { background: #5d5f64; }
.live::after { left: 0; right: 0; }
.tray { margin-left: auto; display: flex; align-items: center; padding-right: 24px; }
.tray button { width: 30px; display: grid; place-items: center; }
.tray .ime { font-size: 20px; }
.clock { width: 102px; padding-left: 9px; display: flex; flex-direction: column; font: 16px/20px "Noto Sans", "Noto Sans CJK SC", sans-serif; }
.reddot { position: absolute; right: 68px; top: 3px; width: 6px; height: 6px; border-radius: 50%; background: #f00; }
.mark { position: absolute; right: 16px; bottom: 8px; font-size: 19px; line-height: 24px; color: rgba(225,225,225,.7); text-shadow: 1px 1px 1px rgba(0,0,0,.5); }
```
